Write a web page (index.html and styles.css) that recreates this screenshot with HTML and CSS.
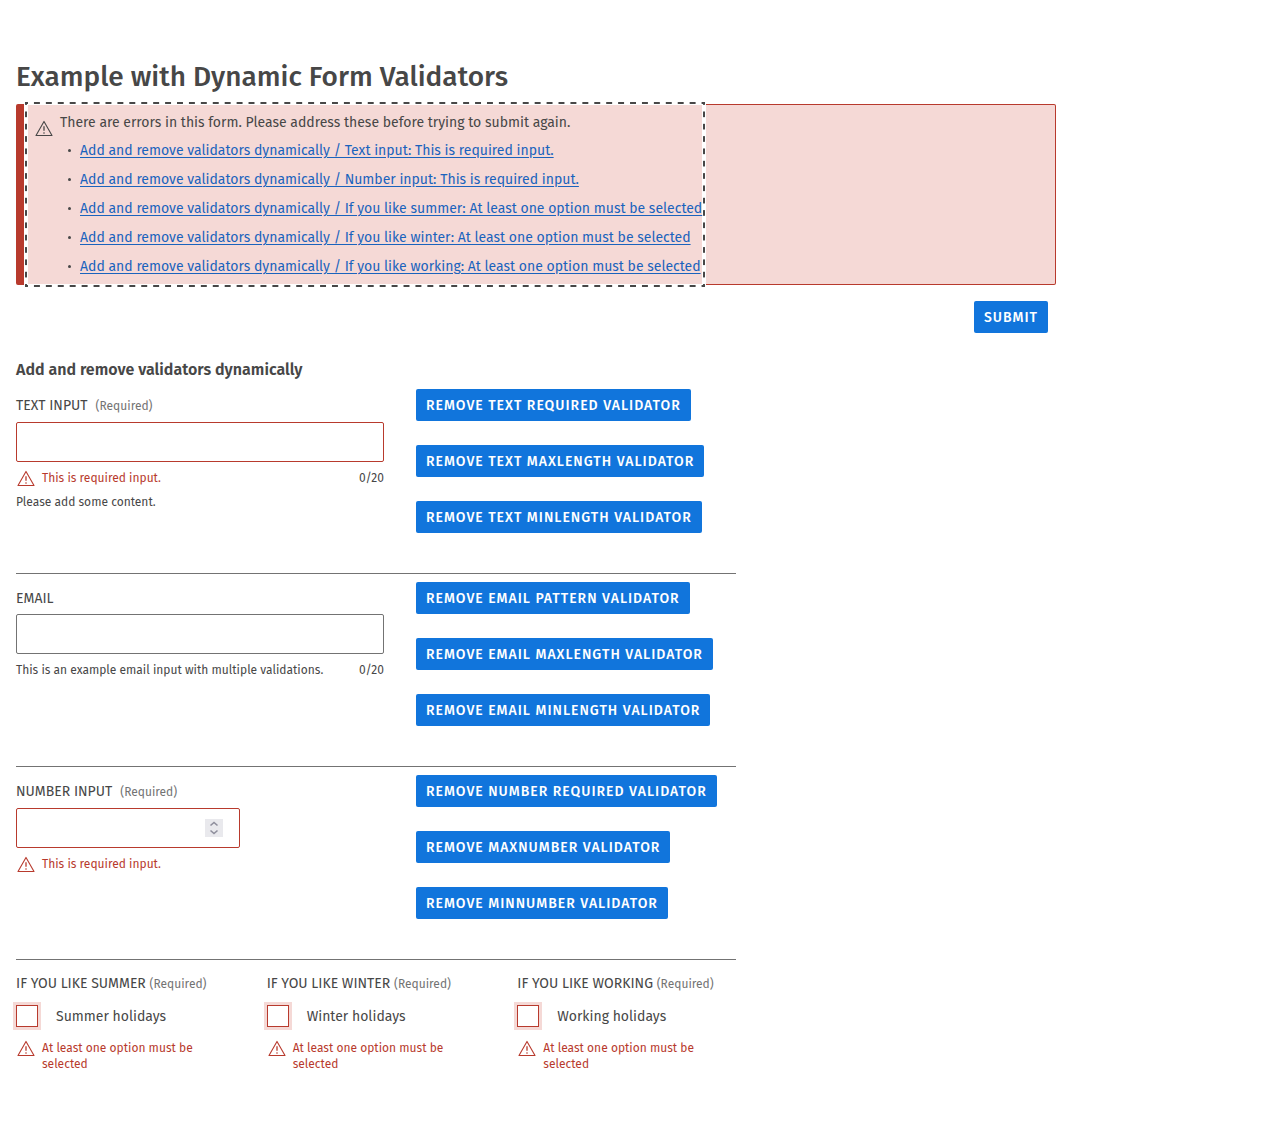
FILE: index.html
```html
<!DOCTYPE html>
<html lang="en">
<head>
<meta charset="utf-8">
<meta name="viewport" content="width=device-width, initial-scale=1">
<title>Example with Dynamic Form Validators</title>
<link rel="stylesheet" href="styles.css">
</head>
<body>
<svg class="sprite" aria-hidden="true">
  <symbol id="warning" viewBox="0 0 20 20">
    <path d="M10 1.400 18 15.500H2Z" fill="none" stroke="currentColor" stroke-width="1.1" stroke-linejoin="round"/>
    <path d="M10 6.300v4.400" stroke="currentColor" stroke-width="1.3"/>
    <circle cx="10" cy="13" r=".8" fill="currentColor"/>
  </symbol>
</svg>
<main class="page">
  <h1 class="title">Example with Dynamic Form Validators</h1>
  <div class="alert" role="alert">
    <div class="alert-focus" tabindex="-1">
      <svg class="icon alert-icon"><use href="#warning"/></svg>
      <div>
        <p class="alert-intro">There are errors in this form. Please address these before trying to submit again.</p>
        <ul class="alert-list">
          <li><a href="#text">Add and remove validators dynamically / Text input: This is required input.</a></li>
          <li><a href="#number">Add and remove validators dynamically / Number input: This is required input.</a></li>
          <li><a href="#summer">Add and remove validators dynamically / If you like summer: At least one option must be selected</a></li>
          <li><a href="#winter">Add and remove validators dynamically / If you like winter: At least one option must be selected</a></li>
          <li><a href="#working">Add and remove validators dynamically / If you like working: At least one option must be selected</a></li>
        </ul>
      </div>
    </div>
  </div>
  <form class="form" novalidate>
    <div class="actions"><button class="button" type="submit">Submit</button></div>
    <div class="fields">
      <h2 class="subtitle">Add and remove validators dynamically</h2>
      <section class="row">
        <div class="field">
          <label class="label" for="text"><span class="caption">Text input</span><span class="required">(Required)</span></label>
          <input class="input invalid" id="text" type="text" aria-invalid="true">
          <div class="message"><span class="error"><svg class="icon"><use href="#warning"/></svg>This is required input.</span><span>0/20</span></div>
          <p class="hint">Please add some content.</p>
        </div>
        <div class="controls">
          <button class="button" type="button">Remove text required validator</button>
          <button class="button" type="button">Remove text maxLength validator</button>
          <button class="button" type="button">Remove text minLength validator</button>
        </div>
      </section>
      <section class="row">
        <div class="field">
          <label class="label" for="email"><span class="caption">Email</span></label>
          <input class="input" id="email" type="email">
          <div class="message"><span>This is an example email input with multiple validations.</span><span>0/20</span></div>
        </div>
        <div class="controls">
          <button class="button" type="button">Remove email pattern validator</button>
          <button class="button" type="button">Remove email maxLength validator</button>
          <button class="button" type="button">Remove email minLength validator</button>
        </div>
      </section>
      <section class="row">
        <div class="field">
          <label class="label" for="number"><span class="caption">Number input</span><span class="required">(Required)</span></label>
          <div class="input invalid number-box">
            <input class="number" id="number" type="number" aria-invalid="true">
            <svg class="spinner" viewBox="0 0 18 18" aria-hidden="true"><path d="M5.500 6.500 9 3.500l3.500 3M5.500 11.500l3.500 3 3.500-3"/></svg>
          </div>
          <div class="message"><span class="error"><svg class="icon"><use href="#warning"/></svg>This is required input.</span></div>
        </div>
        <div class="controls">
          <button class="button" type="button">Remove number required validator</button>
          <button class="button" type="button">Remove maxNumber validator</button>
          <button class="button" type="button">Remove minNumber validator</button>
        </div>
      </section>
      <div class="groups">
        <fieldset class="group">
          <legend class="legend"><span class="caption">If you like summer</span> <span class="required">(Required)</span></legend>
          <label class="option"><input class="check" id="summer" type="checkbox"><span class="option-text">Summer holidays</span></label>
          <p class="error"><svg class="icon"><use href="#warning"/></svg>At least one option must be selected</p>
        </fieldset>
        <fieldset class="group">
          <legend class="legend"><span class="caption">If you like winter</span> <span class="required">(Required)</span></legend>
          <label class="option"><input class="check" id="winter" type="checkbox"><span class="option-text">Winter holidays</span></label>
          <p class="error"><svg class="icon"><use href="#warning"/></svg>At least one option must be selected</p>
        </fieldset>
        <fieldset class="group">
          <legend class="legend"><span class="caption">If you like working</span> <span class="required">(Required)</span></legend>
          <label class="option"><input class="check" id="working" type="checkbox"><span class="option-text">Working holidays</span></label>
          <p class="error"><svg class="icon"><use href="#warning"/></svg>At least one option must be selected</p>
        </fieldset>
      </div>
    </div>
  </form>
</main>
</body>
</html>
```
FILE: styles.css
```css
:root {
  --text: #474747;
  --muted: #737373;
  --red: #b83a2d;
  --pink: #f5d9d6;
  --blue: #1175dc;
}
* { box-sizing: border-box; }
body {
  margin: 0;
  background: #fff;
  color: var(--text);
  font: 14px/20px "Fira Sans", Roboto, sans-serif;
}
h1, h2, p, ul, fieldset { margin: 0; padding: 0; }
.sprite { display: none; }
.page { max-width: 1072px; padding: 57px 16px 56px; }
.title { font-size: 28px; line-height: 40px; font-weight: 500; margin-bottom: 7px; }

.alert {
  border: 1px solid var(--red);
  border-left-width: 8px;
  border-radius: 2px;
  background: var(--pink);
  padding-left: 4px;
}
.alert-focus {
  position: relative;
  display: flex;
  gap: 6px;
  width: fit-content;
  padding: 8px 0 3px 6px;
  background: var(--pink);
  box-shadow: 0 0 0 4px #fff;
  outline: 0;
}
/* dashed focus ring, 6px dashes that meet at the corners */
.alert-focus::after {
  --dash: var(--text) 0 25%, transparent 25% 75%, var(--text) 75%;
  content: "";
  position: absolute;
  inset: -3px;
  pointer-events: none;
  background:
    linear-gradient(90deg, var(--dash)) top left / 12px 2px round no-repeat,
    linear-gradient(90deg, var(--dash)) bottom left / 12px 2px round no-repeat,
    linear-gradient(var(--dash)) top left / 2px 12px no-repeat round,
    linear-gradient(var(--dash)) top right / 2px 12px no-repeat round;
}
.icon { width: 20px; height: 20px; flex: none; }
.alert-icon { margin-top: 7px; }
.alert-intro { margin-bottom: 3px; }
.alert-list { padding-left: 20px; }
.alert-list li {
  list-style: none;
  display: flex;
  align-items: center;
  line-height: 29px;
}
.alert-list li::before {
  content: "";
  width: 3px;
  height: 3px;
  margin: 0 9px 0 -12px;
  border-radius: 50%;
  background: var(--text);
}
a { color: #1a63bd; text-underline-offset: 2px; }

.actions { display: flex; justify-content: flex-end; padding: 16px 8px 25px; }
.button {
  height: 32px;
  padding: 2px 10px 0;
  border: 0;
  border-radius: 2px;
  background: var(--blue);
  color: #fff;
  font: 500 14px/20px "Fira Sans", Roboto, sans-serif;
  letter-spacing: 1px;
  text-transform: uppercase;
}
.fields { max-width: 720px; }
.subtitle { font-size: 16px; line-height: 24px; font-weight: 600; margin-bottom: 7px; }
.row {
  display: grid;
  grid-template-columns: 368px 1fr;
  gap: 32px;
  padding-bottom: 40px;
  margin-bottom: 8px;
  border-bottom: 1px solid var(--muted);
}
.controls { display: flex; flex-direction: column; align-items: flex-start; gap: 24px; }
.label { display: flex; align-items: baseline; gap: 8px; padding: 7px 0 5px; }
.caption { text-transform: uppercase; }
.required { font-size: 12px; color: var(--muted); }
.input {
  display: block;
  width: 100%;
  height: 40px;
  padding: 0 16px;
  border: 1px solid var(--muted);
  border-radius: 2px;
  background: #fff;
  font: inherit;
}
.invalid { margin-top: 1px; border-color: var(--red); }
.number-box { display: flex; align-items: center; width: 224px; }
.number {
  flex: 1;
  min-width: 0;
  border: 0;
  outline: 0;
  font: inherit;
  appearance: textfield;
}
.spinner { width: 18px; height: 18px; background: #e9e9ed; fill: none; stroke: #8f8f9d; stroke-width: 1.6; }
.message { display: flex; justify-content: space-between; padding-top: 8px; font-size: 12px; line-height: 16px; }
.error { display: flex; gap: 6px; color: var(--red); font-size: 12px; line-height: 16px; }
.hint { padding-top: 8px; font-size: 12px; line-height: 16px; }
.message .icon { margin-bottom: -4px; }

.groups { display: grid; grid-template-columns: repeat(3, 1fr); gap: 32px; padding-top: 6px; }
.group { border: 0; min-width: 0; }
.legend { padding: 0; white-space: nowrap; }
.option { display: flex; align-items: center; gap: 18px; padding: 11px 0 13px; }
.option-text { padding-top: 2px; }
.check {
  appearance: none;
  width: 22px;
  height: 22px;
  margin: 0;
  border: 1px solid var(--red);
  background: #fff;
  box-shadow: 0 0 0 3px var(--pink);
}
```
